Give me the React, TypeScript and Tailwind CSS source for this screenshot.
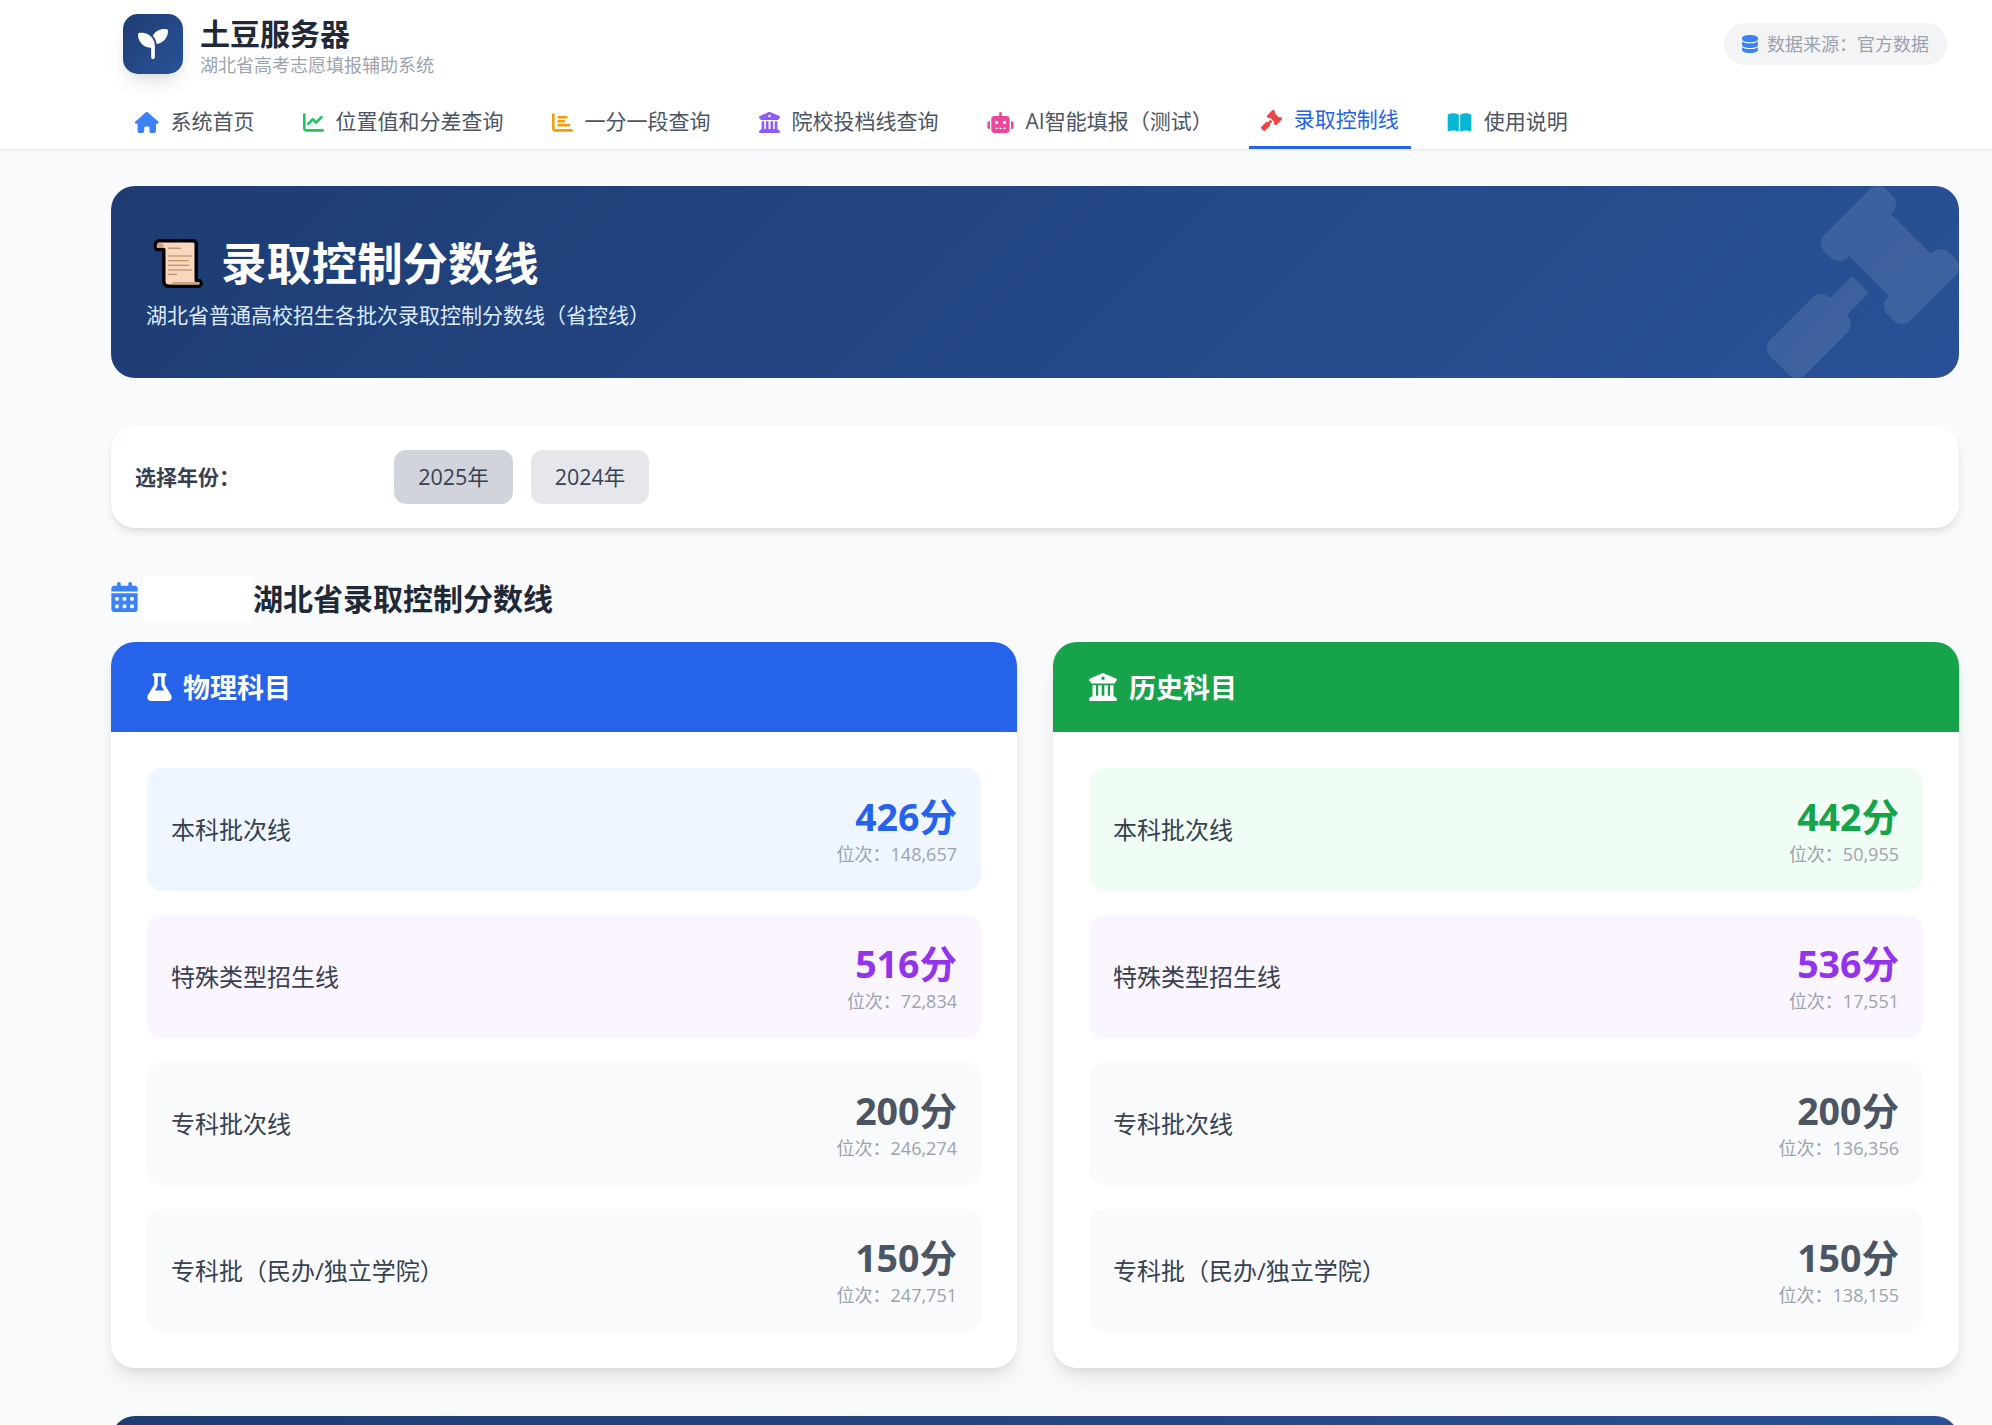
import React from "react";
import {
  FaHouse,
  FaChartLine,
  FaChartBar,
  FaBuildingColumns,
  FaRobot,
  FaGavel,
  FaBookOpen,
  FaDatabase,
  FaFlask,
  FaCalendarDays,
  FaSeedling,
} from "react-icons/fa6";

const navItems = [
  { label: "系统首页", Icon: FaHouse, color: "text-[#3b82f6] w-[23.6px]", active: false },
  { label: "位置值和分差查询", Icon: FaChartLine, color: "text-[#22c55e] w-[21px]", active: false },
  { label: "一分一段查询", Icon: FaChartBar, color: "text-[#f59e0b] w-[21px]", active: false },
  { label: "院校投档线查询", Icon: FaBuildingColumns, color: "text-[#8b5cf6] w-[21px]", active: false },
  { label: "AI智能填报（测试）", Icon: FaRobot, color: "text-[#ec4899] w-[27px]", active: false },
  { label: "录取控制线", Icon: FaGavel, color: "text-[#ef4444] w-[21px]", active: true },
  { label: "使用说明", Icon: FaBookOpen, color: "text-[#06b6d4] w-[25px]", active: false },
];

type Row = { label: string; value: string; rank: string; bg: string; color: string };

const physics: Row[] = [
  { label: "本科批次线", value: "426分", rank: "位次：148,657", bg: "bg-[#eff6ff]", color: "text-[#2563eb]" },
  { label: "特殊类型招生线", value: "516分", rank: "位次：72,834", bg: "bg-[#faf5ff]", color: "text-[#9333ea]" },
  { label: "专科批次线", value: "200分", rank: "位次：246,274", bg: "bg-[#f9fafb]", color: "text-[#4b5563]" },
  { label: "专科批（民办/独立学院）", value: "150分", rank: "位次：247,751", bg: "bg-[#f9fafb]", color: "text-[#4b5563]" },
];

const history: Row[] = [
  { label: "本科批次线", value: "442分", rank: "位次：50,955", bg: "bg-[#f0fdf4]", color: "text-[#16a34a]" },
  { label: "特殊类型招生线", value: "536分", rank: "位次：17,551", bg: "bg-[#faf5ff]", color: "text-[#9333ea]" },
  { label: "专科批次线", value: "200分", rank: "位次：136,356", bg: "bg-[#f9fafb]", color: "text-[#4b5563]" },
  { label: "专科批（民办/独立学院）", value: "150分", rank: "位次：138,155", bg: "bg-[#f9fafb]", color: "text-[#4b5563]" },
];

function ScrollEmoji() {
  return (
    <svg width="50" height="50" viewBox="0 0 50 50" className="shrink-0">
      <path
        d="M3.5 11.5C1.5 8 2 2.8 7 2.8L40 2.8Q43.2 2.8 43.2 6L43.2 42.8L47 42.8Q49.5 47 46 48.2L16 48.2Q10.8 48.2 10.8 43L10.8 11.5Z"
        fill="#f8d6bf"
        stroke="#000"
        strokeWidth="3.4"
        strokeLinejoin="round"
      />
      <path d="M4 10C3 7 4 4.5 7 4.5C9.5 4.5 10.5 6.5 10.8 10Z" fill="#cfa27c" />
      <path d="M18 46.5L20 44L43 44L47 44.5L46.5 46.5Z" fill="#cfa27c" />
      <g stroke="#c49a6c" strokeWidth="1.4">
        <path d="M15 10.2H28" />
        <path d="M15 18H39" />
        <path d="M15 22.7H36" />
        <path d="M15 27.3H36" />
        <path d="M15 32H39" />
        <path d="M15 36.4H24" />
      </g>
    </svg>
  );
}

function ScoreCard({ title, icon, head, gap, rows }: { title: string; icon: React.ReactNode; head: string; gap: string; rows: Row[] }) {
  return (
    <div className="flex-1 rounded-[24px] bg-white overflow-hidden shadow-[0_12px_19px_-4px_rgba(0,0,0,0.1),0_5px_8px_-2px_rgba(0,0,0,0.05)]">
      <div className={`h-[90px] flex items-center px-[36px] text-white ${head} ${gap}`}>
        {icon}
        <span className="text-[27px] leading-[38px] font-bold pt-[2px]">{title}</span>
      </div>
      <div className="p-[36px] flex flex-col gap-[24px]">
        {rows.map((r) => (
          <div key={r.label} className={`h-[123px] rounded-[15px] px-[24px] flex items-center justify-between ${r.bg}`}>
            <span className="text-[24px] leading-[36px] text-[#374151]">{r.label}</span>
            <div className="text-right pt-[2px]">
              <div className={`text-[37.5px] leading-[45px] font-bold ${r.color}`}>{r.value}</div>
              <div className="mt-[3px] text-[18px] leading-[25px] text-[#9ca3af]">{r.rank}</div>
            </div>
          </div>
        ))}
      </div>
    </div>
  );
}

export default function App() {
  return (
    <div className="h-screen overflow-hidden bg-[#f9fafb] font-['Open_Sans','Noto_Sans_CJK_SC',sans-serif]">
      <header className="h-[149px] bg-white shadow-[0_1px_3px_rgba(0,0,0,0.08)] pl-[123px] pr-[45px] relative">
        <div className="h-[88px] flex items-center justify-between">
          <div className="flex items-center gap-[17px]">
            <div className="w-[60px] h-[60px] rounded-[15px] bg-[linear-gradient(135deg,#1e3c72,#2a5298)] flex items-center justify-center text-white shadow-[0_12px_19px_-4px_rgba(0,0,0,0.1),0_5px_8px_-2px_rgba(0,0,0,0.05)]">
              <FaSeedling className="text-[30px]" />
            </div>
            <div className="pt-[4px]">
              <div className="text-[30px] leading-[36px] font-bold text-[#1f2937]">土豆服务器</div>
              <div className="mt-[1px] text-[18px] leading-[24px] text-[#9ca3af]">湖北省高考志愿填报辅助系统</div>
            </div>
          </div>
          <div className="h-[42px] rounded-full bg-[#f3f4f6] px-[18px] flex items-center gap-[9px] text-[18px] text-[#9ca3af]">
            <FaDatabase className="text-[#3b82f6] text-[18px] w-[16px]" />
            <span>数据来源：官方数据</span>
          </div>
        </div>
        <nav className="flex h-[61px] gap-[24px]">
          {navItems.map(({ label, Icon, color, active }) => (
            <div
              key={label}
              className={`px-[12px] pt-[10px] flex items-center text-[21px] border-b-[3px] ${
                active ? "border-[#2563eb] text-[#2563eb]" : "border-transparent text-[#4b5563]"
              }`}
            >
              <div className={`flex items-center gap-[12px] ${active ? "-translate-y-[2px]" : ""}`}>
                <Icon className={`h-[21px] ${color}`} />
                <span className="whitespace-nowrap">{label}</span>
              </div>
            </div>
          ))}
        </nav>
      </header>

      <main className="pl-[111px] pr-[33px] pt-[37px] flex flex-col">
        <section className="relative h-[192px] rounded-[24px] overflow-hidden bg-[linear-gradient(135deg,#1e3c72,#2a5298)] px-[36px] flex flex-col justify-center">
          <FaGavel className="absolute right-0 top-0 w-[192px] h-[192px] text-white opacity-10" />
          <div className="flex items-center gap-[18px] pl-[6px] mb-[6px]">
            <ScrollEmoji />
            <h1 className="text-[45.4px] leading-[60px] font-bold text-white">录取控制分数线</h1>
          </div>
          <p className="-ml-[1px] text-[21px] leading-[32px] text-[#dbeafe]">湖北省普通高校招生各批次录取控制分数线（省控线）</p>
        </section>

        <section className="mt-[48px] h-[102px] rounded-[24px] bg-white p-[24px] flex items-center shadow-[0_5px_8px_-1px_rgba(0,0,0,0.1),0_2px_5px_-2px_rgba(0,0,0,0.06)]">
          <span className="w-[259px] pt-[2px] text-[21px] font-bold text-[#374151]">选择年份：</span>
          <div className="flex gap-[18px]">
            <div className="w-[119px] h-[54px] pt-[1px] rounded-[12px] bg-[#d1d5db] flex items-center justify-center text-[21.5px] text-[#374151]">2025年</div>
            <div className="w-[118px] h-[54px] pt-[1px] rounded-[12px] bg-[#e5e7eb] flex items-center justify-center text-[21.5px] text-[#374151]">2024年</div>
          </div>
        </section>

        <div className="mt-[48px] h-[46px] flex items-center">
          <FaCalendarDays className="h-[30px] text-[#3b82f6] w-[27px] mb-[5px]" />
          <div className="ml-[5px] w-[110px] h-[46px] bg-white" />
          <h2 className="text-[30px] leading-[46px] font-bold text-[#1f2937]">湖北省录取控制分数线</h2>
        </div>

        <div className="mt-[20px] flex gap-[36px]">
          <ScoreCard title="物理科目" icon={<FaFlask className="h-[28px] w-[25px]" />} head="bg-[#2563eb]" gap="gap-[11px]" rows={physics} />
          <ScoreCard title="历史科目" icon={<FaBuildingColumns className="h-[28px] w-[28px]" />} head="bg-[#16a34a]" gap="gap-[12px]" rows={history} />
        </div>

        <section className="mt-[48px] h-[192px] shrink-0 rounded-[24px] bg-[linear-gradient(135deg,#1e3c72,#2a5298)]" />
      </main>
    </div>
  );
}
